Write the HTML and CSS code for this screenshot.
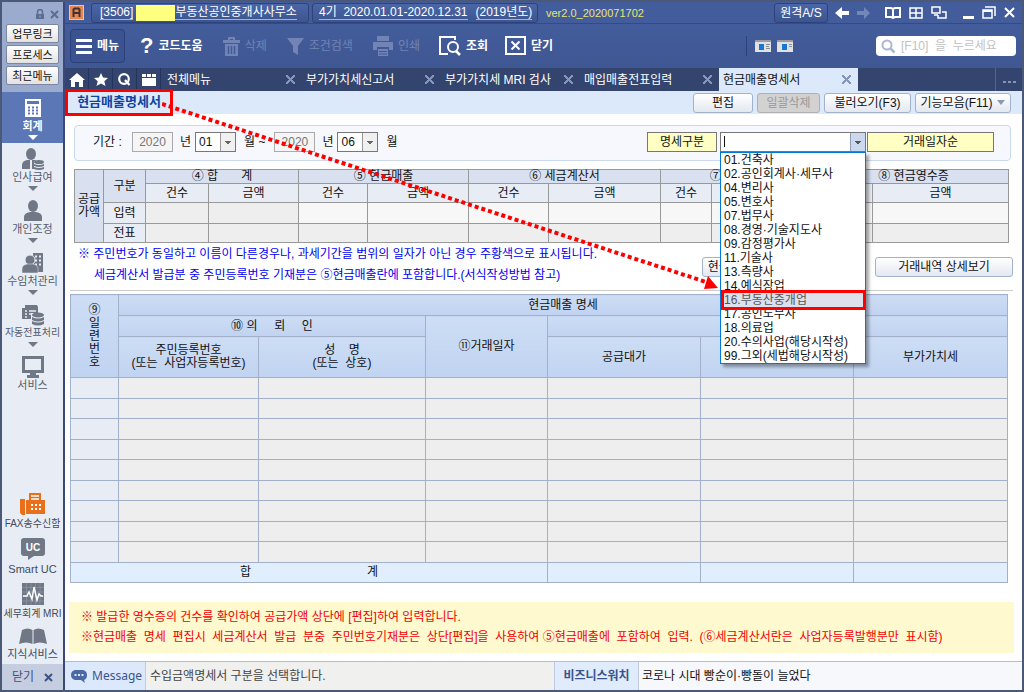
FILE: index.html
```html
<!DOCTYPE html>
<html lang="ko">
<head>
    <meta charset="UTF-8">
    <meta name="viewport" content="width=device-width, initial-scale=1.0">
    <title>현금매출명세서</title>
    <link rel="stylesheet" href="styles.css">
</head>
<body>
    <div class="window">
        <aside class="sidebar">
            <div class="quick">
                <div class="quick-icons">
                    <svg width="10" height="11" viewBox="0 0 10 11"><path d="M2.5 5V3a2.5 2.500 0 0 1 5 0v2" fill="none" stroke="#5d6c92" stroke-width="1.5"/><path d="M1 5h8v5H1z" fill="#5d6c92"/><path d="M4.500 6.500h1v2h-1z" fill="#9aabce"/></svg>
                    <svg width="9" height="9" viewBox="0 0 9 9"><path d="M1 1l7 7M8 1l-7 7" stroke="#5d6c92" stroke-width="2"/></svg>
                </div>
                <button>업무링크</button>
                <button>프로세스</button>
                <button>최근메뉴</button>
            </div>
            <nav class="side-menu">
                <a href="#" class="active">
                    <svg width="16" height="20" viewBox="0 0 16 20"><path d="M0 1h16v18H0z" fill="#fff"/><path d="M2 3h12v3H2z" fill="#5b77b5"/><path d="M3 9.500h10M3 12.500h10M3 15.500h10" stroke="#5b77b5" stroke-width="2" stroke-dasharray="2 2"/></svg>
                    <span>회계</span><i></i>
                </a>
                <a href="#">
                    <svg width="24" height="22" viewBox="0 0 24 22"><ellipse cx="10" cy="6" rx="5" ry="6"/><path d="M1 21v-4q0-4 5-5h8q3 1 4 4v5z"/><path d="M10 12v9" stroke="#e8ecf5" stroke-width="2"/><path d="M13 13h10v9H13z" fill="#e8ecf5"/><ellipse cx="18" cy="14" rx="5" ry="2"/><path d="M13 16q5 2 10 0v2q-5 2-10 0zM13 19q5 2 10 0v2q-5 2-10 0z"/></svg>
                    <span>인사급여</span><i></i>
                </a>
                <a href="#">
                    <svg width="20" height="22" viewBox="0 0 20 22"><ellipse cx="10" cy="6" rx="5" ry="6"/><path d="M1 21v-4q0-4 6-5h6q6 1 6 5v4z"/></svg>
                    <span>개인조정</span><i></i>
                </a>
                <a href="#">
                    <svg width="22" height="22" viewBox="0 0 22 22"><path d="M11 1h10v19h-9z"/><path d="M13 4.500h6M13 8.500h6M13 12.500h6" stroke="#e8ecf5" stroke-width="2" stroke-dasharray="2 2"/><ellipse cx="8" cy="8" rx="5" ry="5" stroke="#e8ecf5"/><path d="M0 21v-4q0-4 5-5h6q5 1 5 5v4z" stroke="#e8ecf5" stroke-width=".5"/></svg>
                    <span>수임처관리</span><i></i>
                </a>
                <a href="#">
                    <svg width="22" height="22" viewBox="0 0 22 22"><path d="M3 1h12l1 2v12H0V4h3z"/><path d="M3 7h2M7 7h7M3 10h2M7 10h4M3 13h2" stroke="#e8ecf5" stroke-width="1.500"/><path d="M9 9h13v13H9z" fill="#e8ecf5"/><ellipse cx="16" cy="11" rx="6" ry="2.500"/><path d="M10 13q6 3 12 0v3q-6 3-12 0zM10 17q6 3 12 0v3q-6 3-12 0z"/></svg>
                    <span class="tight">자동전표처리</span><i></i>
                </a>
                <a href="#">
                    <svg width="24" height="22" viewBox="0 0 24 22"><path d="M1 0h22v17H1z"/><path d="M4 3h16v11H4z" fill="#e8ecf5"/><path d="M9 17h6v2h3v3H6v-3h3z"/></svg>
                    <span>서비스</span>
                </a>
            </nav>
            <nav class="side-links">
                <a href="#">
                    <svg width="26" height="22" viewBox="0 0 26 22"><path d="M0 6h5v16H2l-2-2zM6 7h3V0h12v7h4v14H6z" fill="#e8701c"/><path d="M11 3h8M11 6h8" stroke="#fff" stroke-width="1.500"/><path d="M11 12h10M11 16h10" stroke="#fff" stroke-width="2" stroke-dasharray="2 2"/></svg>
                    <span class="tight">FAX송수신함</span>
                </a>
                <a href="#">
                    <svg width="24" height="22" viewBox="0 0 24 22"><path d="M3 0h18q3 0 3 3v12q0 3-3 3h-8l-6 4v-4H3q-3 0-3-3V3q0-3 3-3z"/><text x="12" y="13" text-anchor="middle" class="uc">UC</text></svg>
                    <span>Smart UC</span>
                </a>
                <a href="#">
                    <svg width="22" height="22" viewBox="0 0 22 22"><path d="M0 0h22v22H0z"/><path d="M4.500 0v22M9 0v22M13.500 0v22M18 0v22M0 4.500h22M0 9h22M0 13.500h22M0 18h22" stroke="#929aaa" stroke-width=".6"/><path d="M1 13h4l2-4 3 7 2-12 3 13 2-6 2 2h2" fill="none" stroke="#fff" stroke-width="1.500"/></svg>
                    <span class="tight">세무회계 MRI</span>
                </a>
                <a href="#">
                    <svg width="28" height="17" viewBox="0 0 28 17"><path d="M3 2q6-3 10.500 0v14q-6-3-13.500 0zM25 2q-6-3-10.500 0v14q6-3 13.500 0z"/></svg>
                    <span>지식서비스</span>
                </a>
            </nav>
            <button class="side-close">닫기 <svg width="9" height="9" viewBox="0 0 9 9"><path d="M1 1l7 7M8 1l-7 7" stroke="#3f5184" stroke-width="2"/></svg></button>
        </aside>

        <main class="main">
            <header class="titlebar">
                <svg class="logo" width="15" height="15" viewBox="0 0 15 15"><path d="M0 0h15v15H0z" fill="#f6c29b"/><path d="M1 1h13v13H1z" fill="#e58850"/><path d="M4.500 12V4.500L5.500 3.500h4l1 1V12M4.500 8h6" fill="none" stroke="#432f35" stroke-width="2"/></svg>
                <div class="title-box company"><u>[3506]</u><span class="mask"></span><u>부동산공인중개사사무소</u></div>
                <div class="title-box period"><u>4기&nbsp; 2020.01.01-2020.12.31</u><u>(2019년도)</u></div>
                <span class="version">ver2.0_2020071702</span>
                <button class="remote">원격A/S</button>
                <div class="window-icons">
                    <svg width="14" height="12" viewBox="0 0 14 12"><path d="M7 0v4h7v4H7v4L0 6z" fill="#fff"/></svg>
                    <svg width="14" height="12" viewBox="0 0 14 12"><path d="M7 0v4H0v4h7v4l6-6z" fill="#7387ba"/></svg>
                    <svg class="book" width="16" height="14" viewBox="0 0 16 14"><path d="M1 2h5l2 1 2-1h5v9h-5l-2 1-2-1H1zM8 3v10" fill="none" stroke="#fff" stroke-width="2"/></svg>
                    <svg width="14" height="12" viewBox="0 0 14 12"><path d="M1 1h12v10H1zM7 1v10M1 6h12" fill="none" stroke="#fff" stroke-width="1.500"/></svg>
                    <svg width="16" height="13" viewBox="0 0 16 13"><path d="M1 1h8v6H1zM7 9v3h8V6h-4M3 9h4" fill="none" stroke="#fff" stroke-width="1.500"/></svg>
                    <svg class="min" width="11" height="12" viewBox="0 0 11 12"><path d="M0 9h11v3H0z" fill="#fff"/></svg>
                    <svg width="14" height="13" viewBox="0 0 14 13"><path d="M3 1h10v9M1 4h9v8H1z" fill="none" stroke="#fff" stroke-width="1.500"/><path d="M1 4h9v2H1z" fill="#fff"/></svg>
                    <svg width="11" height="11" viewBox="0 0 11 11"><path d="M1 1l9 9M10 1l-9 9" stroke="#fff" stroke-width="2"/></svg>
                </div>
            </header>

            <div class="toolbar">
                <button class="menu-btn"><svg width="16" height="15" viewBox="0 0 16 15"><path d="M0 1.500h16M0 7.500h16M0 13.500h16" stroke="#fff" stroke-width="3"/></svg>메뉴</button>
                <button class="help"><b>?</b>코드도움</button>
                <button class="trash" disabled><svg width="17" height="19" viewBox="0 0 17 19"><path d="M5 0h7v3h5v3H0V3h5zM7 2v1h3V2zM2 7h13v12H2z" fill-rule="evenodd"/><path d="M5.500 9v8M8.500 9v8M11.500 9v8" stroke="#405a98" stroke-width="1.500"/></svg>삭제</button>
                <button class="filter-btn" disabled><svg width="17" height="17" viewBox="0 0 17 17"><path d="M0 0h17l-6 8v9l-5-3V8z"/></svg>조건검색</button>
                <button class="print" disabled><svg width="20" height="20" viewBox="0 0 20 20"><path d="M4 0h12v5H4zM0 6h20v8h-4v-3H4v3H0zM5 13h10v7H5z"/><path d="M6 15.500h8M6 18h8" stroke="#405a98"/></svg>인쇄</button>
                <button class="search-btn"><svg width="22" height="20" viewBox="0 0 22 20"><path d="M16 4V1H1v17h8" fill="none" stroke="#fff" stroke-width="2"/><circle cx="14" cy="11" r="5" fill="none" stroke="#fff" stroke-width="2"/><path d="M17 15l4 4" stroke="#fff" stroke-width="2.500"/></svg>조회</button>
                <button class="close-btn"><svg width="21" height="20" viewBox="0 0 21 20"><path d="M1 1h19v17H1z" fill="none" stroke="#fff" stroke-width="2"/><path d="M6.500 5.500l8 8M14.500 5.500l-8 8" stroke="#fff" stroke-width="2"/></svg>닫기</button>
                <div class="views">
                    <svg width="16" height="12" viewBox="0 0 16 12"><path d="M0 0h16v12H0z" fill="#dfe1e4"/><path d="M0 0h16v2H0z" fill="#9c9c9f"/><path d="M4 4h5v6H4z" fill="#1678d2"/><path d="M11 4.500h4M11 6.500h3M11 8.500h4" stroke="#8a8f98"/></svg>
                    <svg width="16" height="12" viewBox="0 0 16 12"><path d="M0 0h16v12H0z" fill="#dfe1e4"/><path d="M0 0h16v2H0z" fill="#9c9c9f"/><path d="M5 4h5v6H5z" fill="#1678d2"/><path d="M12 4.500h3M12 6.500h3" stroke="#8a8f98"/></svg>
                </div>
                <label class="search">
                    <svg width="15" height="15" viewBox="0 0 15 15"><circle cx="6" cy="6" r="4.500" fill="none" stroke="#aab8d6" stroke-width="2"/><path d="M9.500 9.500l4 4" stroke="#aab8d6" stroke-width="2.500"/></svg>
                    <input type="text" placeholder="[F10]  을  누르세요" aria-label="검색">
                </label>
            </div>

            <nav class="tabs">
                <a href="#" class="icon-tab"><svg width="16" height="14" viewBox="0 0 16 14"><path d="M8 0l8 7h-2v7h-4V9H6v5H2V7H0z" fill="#fff"/></svg></a>
                <a href="#" class="icon-tab"><svg width="14" height="13" viewBox="0 0 14 13"><path d="M7 0l2 4.500 5 .5-3.700 3.200 1.200 4.800L7 10.400 2.500 13l1.200-4.800L0 5l5-.5z" fill="#fff"/></svg></a>
                <a href="#" class="icon-tab"><svg width="13" height="13" viewBox="0 0 13 13"><circle cx="6" cy="6" r="4.800" fill="none" stroke="#fff" stroke-width="2.200"/><path d="M7 7l4.500 5" stroke="#fff" stroke-width="2.200"/></svg></a>
                <a href="#" class="icon-tab"><svg width="14" height="12" viewBox="0 0 14 12"><path d="M0 0h4v3H0zM5 0h4v3H5zM10 0h4v3h-4zM0 4h14v8H0z" fill="#fff"/></svg></a>
                <a href="#" class="tab">전체메뉴<i></i></a>
                <a href="#" class="tab">부가가치세신고서<i></i></a>
                <a href="#" class="tab">부가가치세 MRI 검사<i></i></a>
                <a href="#" class="tab">매입매출전표입력<i></i></a>
                <a href="#" class="tab current">현금매출명세서<i></i></a>
                <button class="more" aria-label="더보기"><svg width="13" height="3" viewBox="0 0 13 3"><path d="M0 0h3v2H0zM5 0h3v2H5zM10 0h3v2h-3z" fill="#8493b7"/></svg></button>
            </nav>

            <div class="subhead">
                <h1>현금매출명세서</h1>
                <button class="btn edit">편집</button>
                <button class="btn bulk" disabled>일괄삭제</button>
                <button class="btn load">불러오기(F3)</button>
                <button class="btn funcs">기능모음(F11)<i></i></button>
            </div>

            <section class="filter">
                <span class="period-label">기간 :</span>
                <input id="year-from" type="text" value="2020" disabled>
                <label for="year-from">년</label>
                <select id="month-from"><option>01</option></select>
                <label for="month-from">월 ~</label>
                <input id="year-to" type="text" value="2020" disabled>
                <label for="year-to">년</label>
                <select id="month-to"><option>06</option></select>
                <label for="month-to">월</label>
                <label class="tag" for="kind">명세구분</label>
                <div class="combo">
                    <select id="kind"><option></option></select>
                    <ul class="options">
                        <li>01.건축사</li>
                        <li>02.공인회계사·세무사</li>
                        <li>04.변리사</li>
                        <li>05.변호사</li>
                        <li>07.법무사</li>
                        <li>08.경영·기술지도사</li>
                        <li>09.감정평가사</li>
                        <li>11.기술사</li>
                        <li>13.측량사</li>
                        <li>14.예식장업</li>
                        <li class="selected">16.부동산중개업</li>
                        <li>17.공인노무사</li>
                        <li>18.의료업</li>
                        <li>20.수의사업(해당시작성)</li>
                        <li>99.그외(세법해당시작성)</li>
                    </ul>
                </div>
                <button class="sort">거래일자순</button>
            </section>

            <table class="summary">
                <colgroup>
                    <col class="w29"><col class="w42"><col class="w63"><col class="w90"><col class="w69"><col class="w101"><col class="w80"><col class="w112"><col class="w51"><col class="w107"><col class="w54"><col class="w136">
                </colgroup>
                <tr class="group">
                    <th rowspan="4">공급<br>가액</th>
                    <th rowspan="2">구분</th>
                    <th colspan="2">④ 합       계</th>
                    <th colspan="2">⑤ 현금매출</th>
                    <th colspan="2">⑥ 세금계산서</th>
                    <th colspan="2">⑦ 카드매출</th>
                    <th colspan="2">⑧ 현금영수증</th>
                </tr>
                <tr class="sub">
                    <th>건수</th><th>금액</th><th>건수</th><th>금액</th><th>건수</th><th>금액</th><th>건수</th><th>금액</th><th>건수</th><th>금액</th>
                </tr>
                <tr class="entry">
                    <th>입력</th><td class="sum"></td><td class="sum"></td><td></td><td></td><td></td><td></td><td></td><td></td><td></td><td></td>
                </tr>
                <tr class="slip">
                    <th>전표</th><td></td><td></td><td></td><td></td><td></td><td></td><td></td><td></td><td></td><td></td>
                </tr>
            </table>

            <div class="guide">
                <div>
                    <p>※ 주민번호가 동일하고 이름이 다른경우나, 과세기간을 범위의 일자가 아닌 경우 주황색으로 표시됩니다.</p>
                    <p class="indent">세금계산서 발급분 중 주민등록번호 기재분은 ⑤현금매출란에 포함합니다.(서식작성방법 참고)</p>
                </div>
                <button class="btn receipt">현금영수증 불러오기</button>
                <button class="btn detail-btn">거래내역 상세보기</button>
            </div>

            <table class="detail">
                <colgroup>
                    <col class="c-no"><col class="c-id"><col class="c-name"><col class="c-date"><col class="c-amount"><col class="c-amount"><col class="c-tax">
                </colgroup>
                <thead>
                    <tr>
                        <th rowspan="3">⑨<br>일<br>련<br>번<br>호</th>
                        <th colspan="6">현금매출 명세</th>
                    </tr>
                    <tr>
                        <th colspan="2">⑩ 의     뢰     인</th>
                        <th rowspan="2">⑪거래일자</th>
                        <th colspan="3"></th>
                    </tr>
                    <tr class="tall">
                        <th>주민등록번호<br>(또는  사업자등록번호)</th>
                        <th>성    명<br>(또는  상호)</th>
                        <th>공급대가</th>
                        <th>공급가액</th>
                        <th>부가가치세</th>
                    </tr>
                </thead>
                <tbody>
                    <tr><td></td><td></td><td></td><td></td><td></td><td></td><td></td></tr>
                    <tr><td></td><td></td><td></td><td></td><td></td><td></td><td></td></tr>
                    <tr><td></td><td></td><td></td><td></td><td></td><td></td><td></td></tr>
                    <tr><td></td><td></td><td></td><td></td><td></td><td></td><td></td></tr>
                    <tr><td></td><td></td><td></td><td></td><td></td><td></td><td></td></tr>
                    <tr><td></td><td></td><td></td><td></td><td></td><td></td><td></td></tr>
                    <tr><td></td><td></td><td></td><td></td><td></td><td></td><td></td></tr>
                    <tr><td></td><td></td><td></td><td></td><td></td><td></td><td></td></tr>
                    <tr><td></td><td></td><td></td><td></td><td></td><td></td><td></td></tr>
                </tbody>
                <tfoot>
                    <tr><td colspan="4"><span>합</span><span>계</span></td><td></td><td></td><td></td></tr>
                </tfoot>
            </table>

            <div class="notice">
                <p>※ 발급한 영수증의 건수를 확인하여 공급가액 상단에 [편집]하여 입력합니다.</p>
                <p>※현금매출  명세  편집시  세금계산서  발급  분중  주민번호기재분은  상단[편집]을  사용하여 ⑤현금매출에  포함하여  입력.  (⑥세금계산서란은  사업자등록발행분만  표시함)</p>
            </div>

            <footer class="status">
                <div class="message"><svg width="17" height="14" viewBox="0 0 17 14"><path d="M4 1h8q4 1 4 5t-3 5l1 3-4-3H4q-4-1-4-5t4-5z" fill="#4a67a6"/><path d="M3.500 6h9" stroke="#dce8fb" stroke-width="2" stroke-dasharray="2 1.500"/></svg>Message</div>
                <div class="message-text">수입금액명세서 구분을 선택합니다.</div>
                <div class="biz">비즈니스워치</div>
                <a href="#" class="news">코로나 시대 빵순이·빵돌이 늘었다</a>
            </footer>

            <!-- arrow from the page title to the selected option -->
            <svg class="arrow" width="560" height="194" viewBox="0 0 560 194">
                <path d="M0 2L544 180" stroke="#f00" stroke-width="4" stroke-dasharray="4 3"/>
                <path d="M546 174L556 186L542 187z" fill="#f00"/>
            </svg>
        </main>
    </div>
</body>
</html>
```
FILE: styles.css
```css
* {
    box-sizing: border-box;
}

body, button, input, select {
    font-family: "Liberation Sans", "Noto Sans CJK KR", sans-serif;
    font-size: 12px;
    line-height: 14px;
}

body {
    margin: 0;
    color: #111;
    background: #fff;
}

button, a {
    color: inherit;
    text-decoration: none;
    cursor: pointer;
}

button {
    padding: 0;
    border: 0;
    background: none;
    white-space: nowrap;
}

p, ul, h1 {
    margin: 0;
    padding: 0;
}

svg {
    flex: none;
}

.window {
    display: flex;
    min-height: 100vh;
    border: 2px solid #4b5878;
}

/* sidebar */
.sidebar {
    display: flex;
    flex-direction: column;
    flex: none;
    width: 63px;
    border-right: 2px solid #3c4879;
    background: #e8ecf5;
}

.quick {
    display: flex;
    flex-direction: column;
    gap: 2px;
    height: 90px;
    padding: 4px 4px 2px;
    background: #9aabce;
}

.quick-icons {
    display: flex;
    justify-content: flex-end;
    align-items: center;
    gap: 5px;
    height: 16px;
}

.quick button {
    height: 19px;
    border: 1px solid #7c86a0;
    border-radius: 2px;
    background: linear-gradient(#fff, #e2e2e4);
    font-size: 11px;
}

.side-menu a {
    display: flex;
    flex-direction: column;
    align-items: center;
    height: 52px;
    padding-top: 5px;
    color: #555c69;
    font-size: 11px;
    white-space: nowrap;
}

.side-menu svg, .side-links svg {
    fill: #707886;
}

.side-menu svg {
    height: 22px;
}

.side-menu i {
    margin-top: 2px;
    border: 5px solid transparent;
    border-top-color: #707886;
    border-bottom: 0;
}

.side-menu .active {
    height: 51px;
    background: #5b77b5;
    color: #fff;
    font-weight: bold;
}

.side-menu .active i {
    border-top-color: #fff;
}

.sidebar .tight {
    font-size: 10px;
}

.side-links {
    display: flex;
    flex-direction: column;
    gap: 7px;
    margin-top: auto;
}

.side-links a {
    display: flex;
    flex-direction: column;
    align-items: center;
    gap: 2px;
    color: #444a56;
    font-size: 11px;
    white-space: nowrap;
}

.uc {
    fill: #fff;
    font-size: 10px;
    font-weight: bold;
}

.side-close {
    display: flex;
    justify-content: center;
    align-items: center;
    gap: 10px;
    height: 26px;
    margin-top: 3px;
    background: #c5cee1;
    color: #3f5184;
}

/* title bar */
.main {
    position: relative;
    display: flex;
    flex-direction: column;
    flex: 1;
    min-width: 0;
}

.titlebar {
    display: flex;
    align-items: center;
    height: 22px;
    padding: 0 7px 0 4px;
    border-bottom: 1px solid #344a86;
    background: #435c9b;
    color: #fff;
    white-space: nowrap;
}

.title-box, .remote {
    display: flex;
    align-items: center;
    height: 20px;
    border: 1px solid #2f437b;
    border-radius: 3px;
    background: linear-gradient(#4b66a6, #3c5590);
}

.title-box u {
    text-decoration: none;
    border-bottom: 1px solid #a3b1d3;
}

.company {
    width: 218px;
    margin-left: 7px;
    padding-left: 8px;
}

.mask {
    width: 39px;
    height: 16px;
    margin-left: 3px;
    background: #ffff80;
}

.period {
    gap: 8px;
    width: 226px;
    margin-left: 3px;
    padding-left: 6px;
}

.version {
    margin-left: 8px;
    color: #e6e676;
    font-size: 11px;
}

.remote {
    justify-content: center;
    width: 54px;
    margin-left: auto;
}

.window-icons {
    display: flex;
    align-items: center;
    gap: 8px;
    margin-left: 7px;
}

.window-icons .book {
    margin-left: 6px;
}

.window-icons .min {
    margin-left: 8px;
}

/* toolbar */
.toolbar {
    display: flex;
    align-items: center;
    height: 44px;
    padding: 0 6px 0 5px;
    background: linear-gradient(#435c9b, #3f5893);
    color: #fff;
}

.toolbar button {
    display: flex;
    align-items: center;
    gap: 5px;
    font-weight: bold;
}

.toolbar button:disabled {
    color: #7184b5;
    fill: #7184b5;
    font-weight: normal;
}

.toolbar .menu-btn {
    justify-content: center;
    width: 55px;
    height: 34px;
    border: 1px solid #2c407a;
    border-radius: 4px;
    background: #3b5390;
}

.help {
    margin-left: 15px;
}

.help b {
    font-size: 22px;
    line-height: 22px;
}

.trash {
    margin-left: 20px;
}

.filter-btn {
    margin-left: 20px;
}

.print {
    margin-left: 20px;
}

.search-btn {
    margin-left: 19px;
}

.close-btn {
    margin-left: 17px;
}

.views {
    display: flex;
    align-items: center;
    gap: 6px;
    height: 20px;
    margin-left: auto;
    padding-left: 8px;
    border-left: 1px solid #2d427c;
}

.search {
    display: flex;
    align-items: center;
    gap: 5px;
    width: 140px;
    height: 20px;
    margin-left: 83px;
    padding: 0 5px;
    border-radius: 4px;
    background: #fff;
}

.search input {
    width: 100%;
    min-width: 0;
    padding: 0;
    border: 0;
    outline: 0;
}

.search input::placeholder {
    color: #c2c2c2;
}

/* tabs */
.tabs {
    display: flex;
    height: 23px;
    background: #33446f;
    color: #fff;
}

.icon-tab {
    display: flex;
    justify-content: center;
    align-items: center;
    width: 24px;
    border-right: 1px solid #25345e;
}

.tab {
    display: flex;
    align-items: center;
    justify-content: space-between;
    flex: 0 1 139px;
    padding: 0 7px 0 4px;
    white-space: nowrap;
}

.tab:nth-child(5) {
    margin-left: 2px;
}

.tab i {
    width: 9px;
    height: 9px;
    background:
        linear-gradient(45deg, transparent 44%, #8595bb 44%, #8595bb 56%, transparent 56%),
        linear-gradient(-45deg, transparent 44%, #8595bb 44%, #8595bb 56%, transparent 56%);
}

.current {
    background: #dce9fb;
    color: #111;
}

.more {
    width: 27px;
    margin-left: auto;
    border-left: 1px solid #53648f;
}

/* page heading and buttons */
.subhead {
    display: flex;
    align-items: center;
    gap: 4px;
    height: 23px;
    padding-right: 11px;
    background: #dce9fb;
}

.subhead h1 {
    width: 108px;
    height: 27px;
    margin-right: auto;
    border: 3px solid #f00;
    color: #0d449f;
    font-size: 13px;
    line-height: 19px;
    text-align: center;
}

.btn {
    height: 20px;
    border: 1px solid #a3b2cb;
    border-radius: 3px;
    background: linear-gradient(#fff, #e3e8f0);
}

.btn:disabled {
    border-color: #b0b0b0;
    background: #d2d2d2;
    color: #999;
}

.edit {
    width: 60px;
}

.bulk {
    width: 63px;
}

.load {
    width: 87px;
}

.funcs {
    width: 96px;
}

.funcs i {
    display: inline-block;
    margin: 0 0 2px 5px;
    border: 4px solid transparent;
    border-top: 5px solid #8b9bb5;
    border-bottom: 0;
}

/* filter row */
.filter {
    display: flex;
    align-items: center;
    height: 36px;
    margin: 11px 11px 0 9px;
    padding: 0 16px 2px 18px;
    border: 1px solid #ccd8ee;
    border-radius: 4px;
    background: #f6f8fd;
    white-space: nowrap;
}

.filter input {
    width: 41px;
    height: 20px;
    margin: 0 7px 0 9px;
    padding: 0;
    border: 1px solid #aaa;
    background: #f5f5f5;
    color: #777;
    text-align: center;
}

.filter select {
    appearance: none;
    width: 41px;
    height: 20px;
    margin: 0 8px 0 4px;
    padding: 0 3px;
    border: 1px solid #777;
    border-radius: 0;
    outline: 0;
    color: #111;
    background:
        linear-gradient(to bottom right, #666 50%, transparent 50%) right 4px top 8px / 3px 4px no-repeat,
        linear-gradient(to bottom left, #666 50%, transparent 50%) right 7px top 8px / 3px 4px no-repeat,
        linear-gradient(#999, #999) right 14px top / 1px 100% no-repeat,
        linear-gradient(#f0f0f0, #f0f0f0) right / 14px 100% no-repeat,
        #fff;
}

.filter .period-label {
    width: 30px;
}

.tag, .sort {
    height: 20px;
    border: 1px solid #777;
    background: #ffffc4;
    line-height: 18px;
    text-align: center;
}

.tag {
    width: 70px;
    margin-left: auto;
}

.sort {
    width: 127px;
    margin-left: 1px;
}

.combo {
    position: relative;
    width: 146px;
    height: 20px;
    margin-left: 3px;
}

/* first layer is the text cursor */
.combo #kind {
    width: 100%;
    margin: 0;
    background:
        linear-gradient(#111, #111) left 3px top 3px / 1px 11px no-repeat,
        linear-gradient(to bottom right, #555 50%, transparent 50%) right 4px top 8px / 3px 4px no-repeat,
        linear-gradient(to bottom left, #555 50%, transparent 50%) right 7px top 8px / 3px 4px no-repeat,
        linear-gradient(#8e9dba, #8e9dba) right 14px top / 1px 100% no-repeat,
        linear-gradient(#cbd8ee, #cbd8ee) right / 14px 100% no-repeat,
        #fff;
}

.options {
    position: absolute;
    top: 20px;
    left: 0;
    z-index: 2;
    width: 146px;
    border: 1px solid #0078d7;
    background: #fff;
    box-shadow: 3px 3px 3px rgba(0, 0, 0, 0.35);
    list-style: none;
}

.options li {
    height: 14px;
    padding-left: 3px;
}

.options .selected {
    position: relative;
    height: 20px;
    margin: -3px -1px -3px 0;
    padding-left: 0;
    border: 3px solid #f00;
    background: #dce1ed;
    color: #555;
}

/* summary table */
table {
    border-collapse: collapse;
    table-layout: fixed;
}

th, td {
    padding: 0;
    font-weight: normal;
    line-height: 13px;
    text-align: center;
    white-space: pre;
}

.summary {
    width: calc(100% - 22px);
    margin: 8px 0 0 9px;
}

.summary th, .summary td {
    border: 1px solid #999;
}

.w29 { width: 29px; }
.w42 { width: 42px; }
.w51 { width: 51px; }
.w54 { width: 54px; }
.w63 { width: 63px; }
.w69 { width: 69px; }
.w80 { width: 80px; }
.w90 { width: 90px; }
.w101 { width: 101px; }
.w107 { width: 107px; }
.w112 { width: 112px; }
.w136 { width: 136px; }

.summary th {
    background: #e8ecf5;
}

.summary .group {
    height: 14px;
}

.summary .group th {
    background: #d9e1f1;
}

.summary .sub {
    height: 19px;
}

.summary .entry {
    height: 21px;
}

.summary .slip {
    height: 19px;
}

.summary td {
    background: #f7f7f7;
}

.summary .sum, .summary .slip td {
    background: #eee;
}

/* blue guide text */
.guide {
    display: flex;
    align-items: flex-end;
    height: 48px;
    margin: 0 9px 0 5px;
    padding: 0 0 4px 8px;
    border-bottom: 1px solid #ccc;
    color: #0000f0;
    line-height: 21px;
    white-space: nowrap;
}

.guide .indent {
    padding-left: 16px;
}

.guide .btn {
    margin-bottom: 9px;
    color: #111;
}

.receipt {
    width: 114px;
    margin-left: auto;
}

.guide .detail-btn {
    width: 138px;
    margin-left: 59px;
}

/* detail table */
.detail {
    width: calc(100% - 20px);
    margin: 3px 0 0 5px;
}

.detail th, .detail td {
    border: 1px solid #a3b0c9;
}

.c-no { width: 48px; }
.c-id { width: 140px; }
.c-name { width: 167px; }
.c-date { width: 122px; }
.c-amount { width: 153px; }
.c-tax { width: 154px; }

.detail tr {
    height: 21px;
}

.detail .tall {
    height: 41px;
}

.detail th {
    background: linear-gradient(#cdddf5, #c0d3f0);
}

.detail tbody tr:nth-child(even) {
    height: 20px;
}

.detail td {
    background: #eee;
}

.detail tbody td:first-child {
    background: #e8ecf5;
}

.detail tfoot tr {
    height: 20px;
}

.detail tfoot td {
    background: #e1eefd;
}

.detail tfoot span + span {
    margin-left: 116px;
}

/* notice and status bar */
.notice {
    margin: 19px 8px 8px 4px;
    padding: 5px 12px 6px;
    background: #fff9cf;
    color: #f00000;
    line-height: 20px;
}

.notice p {
    white-space: pre;
}

.status {
    display: flex;
    height: 29px;
    margin-top: auto;
    border-top: 1px solid #b9bdcb;
    background: #f7f8fc;
    line-height: 28px;
    white-space: nowrap;
}

.message {
    display: flex;
    align-items: center;
    gap: 4px;
    width: 81px;
    padding-left: 6px;
    border-right: 1px solid #c5cbd8;
    background: #dce8fb;
    color: #38548f;
    font-family: "Noto Sans", sans-serif;
}

.message-text {
    flex: 1;
    padding-left: 4px;
    background: #f0f0ef;
    color: #444;
}

.biz {
    width: 85px;
    border: 1px solid #c0cbe2;
    border-width: 0 1px;
    background: #e0ebfc;
    color: #38548f;
    font-weight: bold;
    text-align: center;
}

.news {
    width: 383px;
    padding-left: 3px;
}

.arrow {
    position: absolute;
    top: 100px;
    left: 97px;
    z-index: 3;
    pointer-events: none;
}
```
